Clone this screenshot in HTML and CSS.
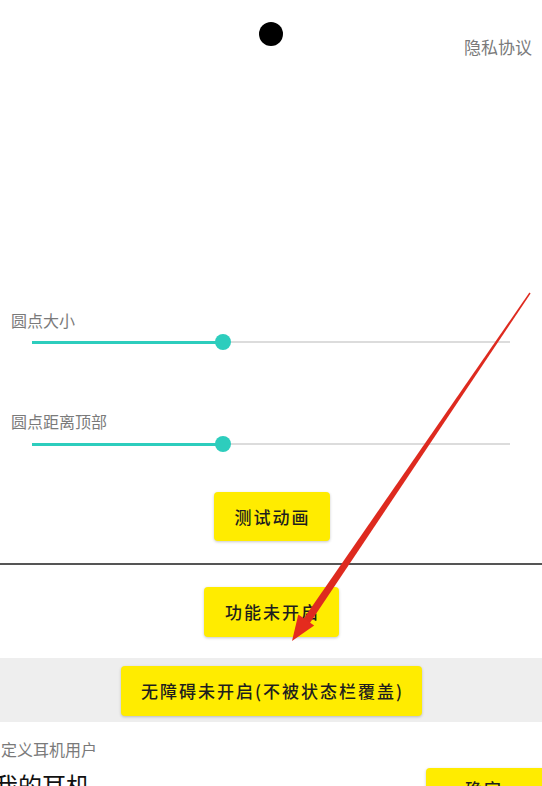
FILE: index.html
```html
<!DOCTYPE html>
<html lang="zh">
<head>
<meta charset="utf-8">
<link rel="stylesheet" href="styles.css">
</head>
<body>
<div class="page">
  <header class="header">
    <span class="spacer"></span>
    <span class="dot"></span>
    <a class="privacy">隐私协议</a>
  </header>

  <section class="settings">
    <div class="label">圆点大小</div>
    <div class="slider">
      <div class="fill" style="width:40%"></div>
      <div class="thumb"></div>
      <div class="rest"></div>
    </div>
    <div class="label label-second">圆点距离顶部</div>
    <div class="slider slider-second">
      <div class="fill" style="width:40%"></div>
      <div class="thumb"></div>
      <div class="rest"></div>
    </div>
    <div class="center">
      <button class="btn btn-test">测试动画</button>
    </div>
  </section>

  <hr class="divider">

  <div class="center">
    <button class="btn">功能未开启</button>
  </div>

  <div class="band">
    <button class="btn btn-wide">无障碍未开启(不被状态栏覆盖)</button>
  </div>

  <div class="label label-custom">自定义耳机用户</div>
  <div class="row">
    <span class="big">我的耳机</span>
    <button class="btn btn-ok">确定</button>
  </div>

  <svg class="arrow" width="542" height="786" viewBox="0 0 542 786">
    <polygon points="530.6,293.4 529.4,292.6 303,619.4 309.4,623.8" fill="#de2a1f"/>
    <polygon points="292,641 298.3,614.5 314.2,625.4" fill="#e42b1e"/>
  </svg>
</div>
</body>
</html>
```
FILE: styles.css
```css
html, body {
  margin: 0;
  padding: 0;
  background: #ffffff;
}
body {
  width: 542px;
  height: 786px;
  overflow: hidden;
  font-family: "Noto Sans CJK SC", "Noto Sans", sans-serif;
}
.page {
  position: relative;
  width: 542px;
  height: 786px;
  overflow: hidden;
}
.header {
  display: grid;
  grid-template-columns: 1fr auto 1fr;
  align-items: start;
  padding-top: 22px;
}
.dot {
  width: 24px;
  height: 24px;
  border-radius: 50%;
  background: #000;
  margin-left: -1px;
}
.privacy {
  justify-self: end;
  margin-top: 14px;
  margin-right: 10px;
  font-size: 17px;
  line-height: 22px;
  color: #7a7a7a;
}
.settings {
  margin-top: 252px;
}
.label {
  font-size: 16px;
  line-height: 20px;
  color: #7a7a7a;
  padding-left: 11px;
}
.label-second {
  margin-top: 59px;
}
.slider {
  position: relative;
  display: flex;
  align-items: center;
  height: 20px;
  margin: 2px 32px 0 32px;
}
.slider-second {
  margin-top: 3px;
}
.fill {
  height: 3px;
  background: #2dcdbd;
}
.rest {
  flex: 1;
  height: 2px;
  background: #dcdcdc;
}
.thumb {
  width: 16px;
  height: 16px;
  border-radius: 50%;
  background: #2dcdbd;
  margin: 0 -8px;
  position: relative;
  z-index: 1;
}
.center {
  display: flex;
  justify-content: center;
}
.btn {
  border: none;
  background: #ffec00;
  border-radius: 4px;
  height: 50px;
  padding: 0 19px 0 21px;
  font-family: "Noto Sans CJK SC", "Noto Sans", sans-serif;
  font-size: 17px;
  font-weight: 500;
  letter-spacing: 2px;
  color: #1e1e1e;
  box-shadow: 0 1px 3px rgba(0, 0, 0, 0.22);
  margin-left: 1px;
}
.btn-test {
  margin-top: 38px;
  height: 49px;
}
.divider {
  border: none;
  height: 1.5px;
  background: #555;
  margin: 22px 0 22px 0;
}
.band {
  margin-top: 21px;
  background: #eeeeee;
  padding: 8px 0 6px 0;
  display: flex;
  justify-content: center;
}
.btn-wide {
  padding: 0 18px 0 20px;
}
.label-custom {
  margin-top: 17px;
  padding-left: 0;
  margin-left: -15px;
}
.row {
  display: flex;
  justify-content: space-between;
  align-items: flex-start;
  margin-top: 9px;
  margin-left: -6px;
  margin-right: -30px;
}
.big {
  font-size: 24px;
  line-height: 30px;
  color: #111;
  margin-top: 2px;
}
.btn-ok {
  width: 146px;
  height: 50px;
  padding: 0 30px 8px 0;
}
.arrow {
  position: absolute;
  left: 0;
  top: 0;
  pointer-events: none;
}
```
